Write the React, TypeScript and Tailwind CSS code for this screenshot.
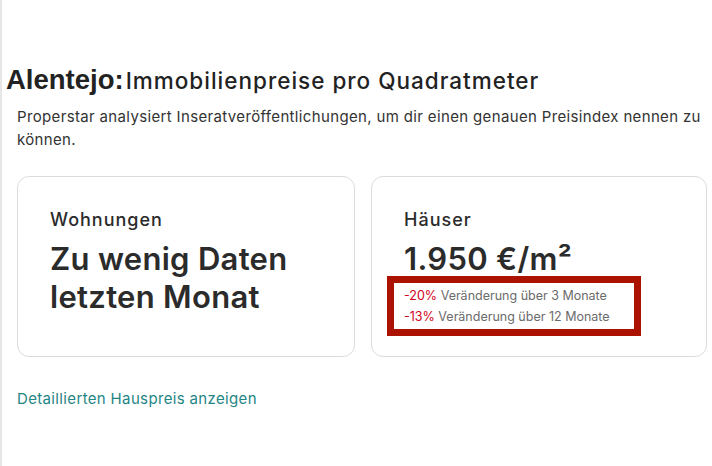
export default function App() {
  return (
    <div className="min-h-[466px] w-[712px] bg-white border-l-2 border-[#e6e6e6] overflow-hidden font-['Inter',sans-serif]">
      <div className="pt-[60px] pl-[4px]">
        <h2 className="flex items-baseline text-[#222] leading-[40px]">
          <span className="font-['Liberation_Sans',Arial,sans-serif] font-bold text-[27.5px]">Alentejo:</span>
          <span className="text-[22.5px] font-medium tracking-[1px] ml-[2px]">
            Immobilienpreise pro Quadratmeter
          </span>
        </h2>
      </div>
      <p className="mt-[4px] pl-[15px] pr-2 text-[15px] leading-[23px] tracking-[0.35px] text-[#333]">
        Properstar analysiert Inseratveröffentlichungen, um dir einen genauen Preisindex nennen zu können.
      </p>

      <div className="grid grid-cols-[338px_336px] gap-[16px] pl-[15px] mt-[25px] text-[#2b2b2b]">
        <div className="h-[181px] rounded-[12px] border border-[#dcdcdc] pl-[32px] pt-[29px]">
          <div className="text-[18px] font-medium leading-[28px] tracking-[1px]">Wohnungen</div>
          <div className="text-[31px] font-semibold leading-[37.5px] tracking-[0.3px] mt-[6px]">
            Zu wenig Daten
            <br />
            letzten Monat
          </div>
        </div>

        <div className="h-[181px] rounded-[12px] border border-[#dcdcdc] pl-[15px] pt-[29px]">
          <div className="pl-[17px] text-[18px] font-medium leading-[28px] tracking-[1px]">Häuser</div>
          <div className="pl-[17px] text-[31px] font-semibold leading-[38px] tracking-[0.3px] mt-[6px]">1.950 €/m²</div>
          <div className="mt-[-2px] w-[254px] border-[7px] border-[#ab1200] pl-[10px] pt-[2px] pb-[2px] text-[12.5px] leading-[21px] text-[#6b6b6b]">
            <div>
              <span className="text-[#d0021b]">-20%</span> Veränderung über 3 Monate
            </div>
            <div>
              <span className="text-[#d0021b]">-13%</span> Veränderung über 12 Monate
            </div>
          </div>
        </div>
      </div>

      <a href="#" className="block mt-[30px] pl-[15px] text-[15px] leading-[24px] tracking-[0.35px] text-[#1f8585]">
        Detaillierten Hauspreis anzeigen
      </a>
    </div>
  );
}
